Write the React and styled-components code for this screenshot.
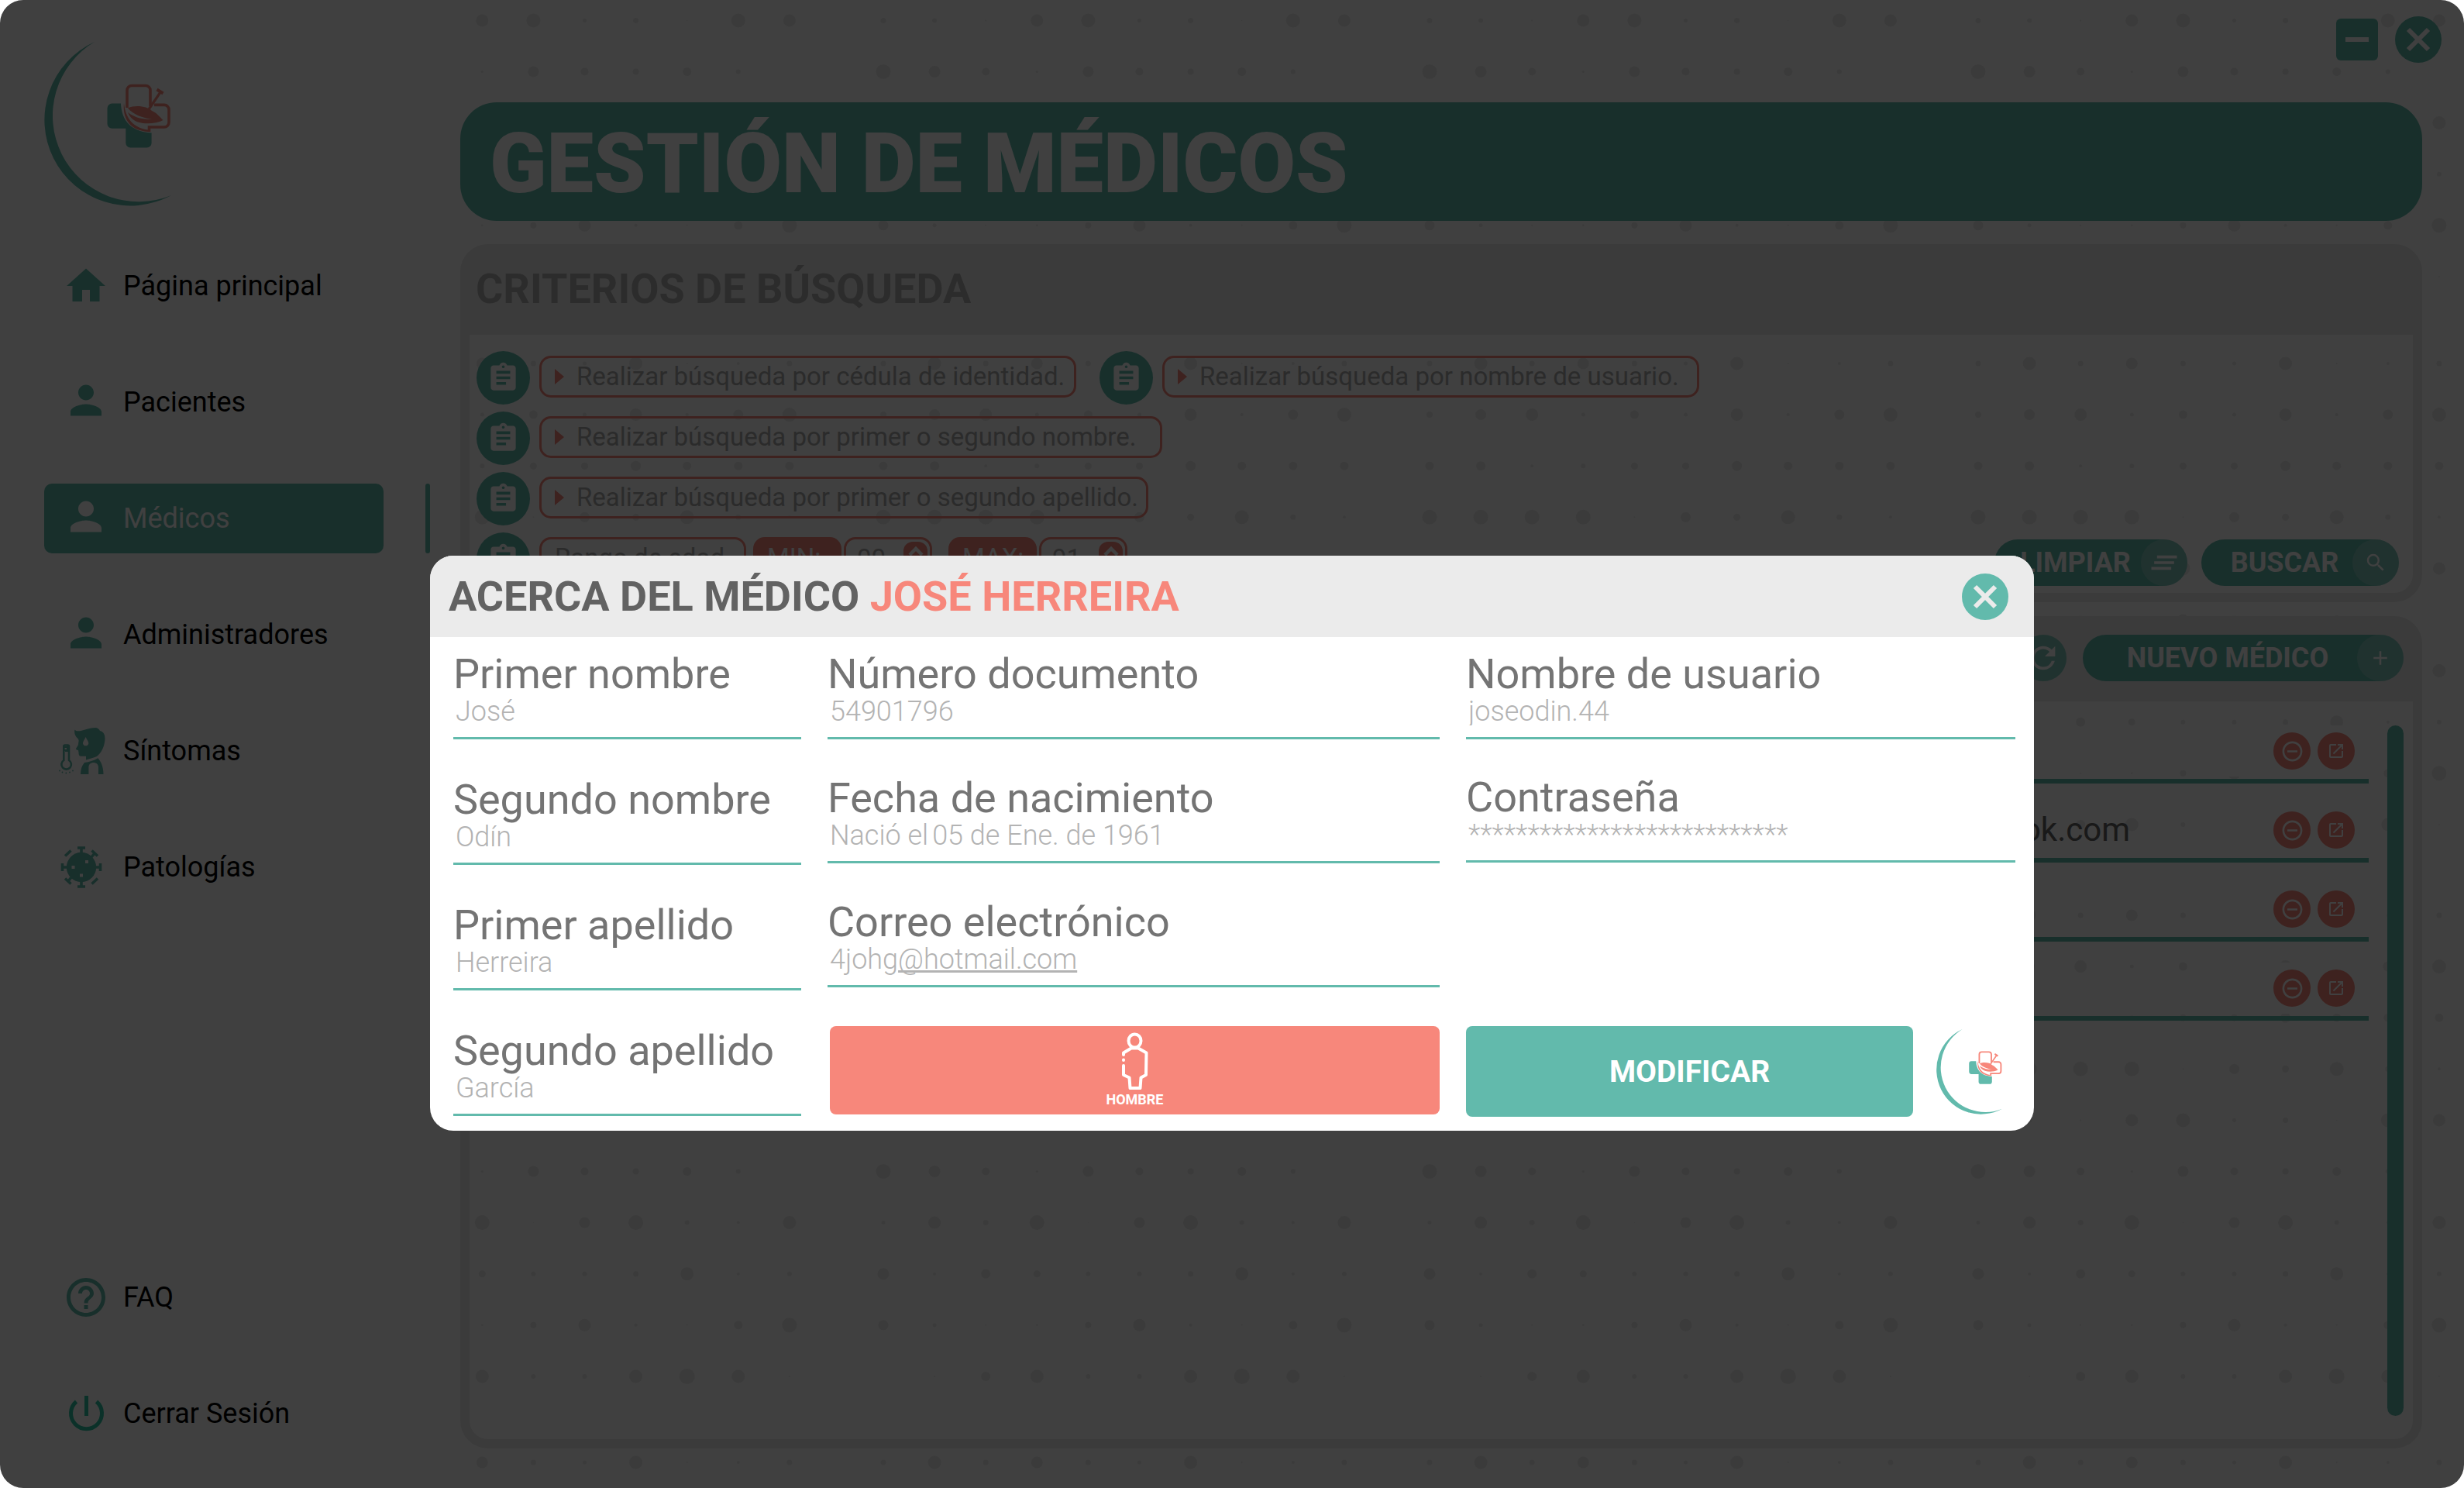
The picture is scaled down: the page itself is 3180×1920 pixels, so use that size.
import React from "react";
import styled, { createGlobalStyle, css } from "styled-components";
import {
  MdHome,
  MdPerson,
  MdHelpOutline,
  MdAssignment,
  MdClearAll,
  MdSearch,
  MdAdd,
  MdRefresh,
  MdRemoveCircleOutline,
  MdOpenInNew,
} from "react-icons/md";

const teal = "#62baac";
const coral = "#f7877b";
const mist = "#ebebeb";

const GlobalStyle = createGlobalStyle`
  *, *::before, *::after { box-sizing: border-box; }
  html, body, #root { height: 100%; }
  body { margin: 0; background: #fff; font-family: Roboto, "Liberation Sans", sans-serif; }
  button, input { font-family: inherit; }
  svg { display: block; flex: none; }
`;

/* ---------- shell ---------- */

const Window = styled.div`
  position: relative;
  display: flex;
  min-height: 100vh;
  background: #fff;
  border-radius: 30px;
  overflow: hidden;
`;

const Dots = styled.svg`
  position: absolute;
  inset: 0;
  width: 100%;
  height: 100%;
  fill: ${mist};
`;

const Sidebar = styled.aside`
  position: relative;
  display: flex;
  flex-direction: column;
  flex: none;
  width: 594px;
  padding: 54px 39px 51px 57px;
`;

const NavList = styled.nav`
  display: flex;
  flex-direction: column;
  gap: 60px;
  margin-top: ${(p) => (p.$bottom ? "auto" : "58px")};
`;

const NavRow = styled.div`
  display: flex;
  justify-content: space-between;
`;

const NavLink = styled.a`
  display: flex;
  align-items: center;
  gap: 18px;
  width: 438px;
  height: 90px;
  padding: 0 24px;
  border-radius: 10px;
  font-size: 36px;
  line-height: 42px;
  text-decoration: none;
  color: ${(p) => (p.$active ? "#fff" : "#000")};
  background: ${(p) => (p.$active ? teal : "transparent")};
  svg {
    width: 60px;
    height: 60px;
    overflow: visible;
    color: ${(p) => (p.$active ? "#fff" : teal)};
  }
`;

const ActiveMark = styled.span`
  width: 6px;
  border-radius: 3px;
  background: ${teal};
`;

const Main = styled.main`
  position: relative;
  display: flex;
  flex-direction: column;
  flex: 1;
  min-width: 0;
  padding: 21px 54px 51px 0;
`;

const WindowControls = styled.div`
  display: flex;
  align-items: center;
  justify-content: flex-end;
  gap: 22px;
  margin: 0 -25px 51px 0;
`;

const ControlButton = styled.button`
  display: flex;
  align-items: center;
  justify-content: center;
  flex: none;
  padding: 0;
  border: 0;
  width: ${(p) => (p.$square ? 54 : 60)}px;
  height: ${(p) => (p.$square ? 54 : 60)}px;
  border-radius: ${(p) => (p.$square ? "6px" : "50%")};
  background: ${teal};
  color: ${(p) => p.$glyph || "#fff"};
`;

const Banner = styled.h1`
  display: flex;
  align-items: center;
  height: 153px;
  margin: 0 0 30px;
  padding: 4px 38px 0;
  border-radius: 47px;
  background: ${teal};
  color: #fff;
  font-size: 108px;
  line-height: 108px;
  font-weight: 900;
`;

/* ---------- panels ---------- */

const Panel = styled.section`
  display: flex;
  flex-direction: column;
  border: 12px solid ${mist};
  border-top: 0;
  border-radius: 36px;
  ${(p) => p.$grow && css`flex: 1; margin-top: 18px;`}
`;

const PanelHead = styled.header`
  display: flex;
  align-items: center;
  justify-content: flex-end;
  gap: 21px;
  height: ${(p) => p.$height}px;
  margin: 0 -12px;
  padding: 0 24px 2px 20px;
  border-radius: 36px 36px 0 0;
  background: ${mist};
`;

const PanelTitle = styled.h2`
  flex: 1;
  margin: 0;
  color: #b0b0b0;
  font-size: 54px;
  line-height: 60px;
  font-weight: 700;
`;

const CriteriaBody = styled.div`
  display: flex;
  align-items: flex-end;
  justify-content: space-between;
  padding: 21px 18px 9px 9px;
`;

const CriteriaList = styled.div`
  display: flex;
  flex-direction: column;
  gap: 9px;
`;

const CriteriaRow = styled.div`
  display: flex;
  gap: 30px;
`;

const Criterion = styled.div`
  display: flex;
  align-items: flex-start;
  gap: 12px;
  > :not(:first-child) {
    margin-top: 6px;
  }
`;

const RoundIcon = styled.span`
  display: flex;
  align-items: center;
  justify-content: center;
  width: 69px;
  height: 69px;
  border-radius: 50%;
  background: ${teal};
  color: #fff;
`;

const Pill = styled.button`
  display: flex;
  align-items: center;
  gap: 16px;
  width: ${(p) => p.$width}px;
  height: 54px;
  padding: 0 17px;
  border: 3px solid ${coral};
  border-radius: 15px;
  background: transparent;
  color: #adadad;
  font-size: 33px;
  line-height: 42px;
  font-weight: 400;
  white-space: nowrap;
`;

const Arrow = styled.span`
  border-left: 12px solid ${coral};
  border-top: 10px solid transparent;
  border-bottom: 10px solid transparent;
`;

const AgeRange = styled.div`
  display: flex;
  align-items: center;
  gap: 3px;
  margin-left: ${(p) => (p.$first ? -3 : 9)}px;
`;

const AgeLabel = styled.label`
  width: 114px;
  height: 54px;
  padding-left: 18px;
  border-radius: 15px;
  background: ${coral};
  color: #fff;
  font-size: 33px;
  line-height: 54px;
  font-weight: 400;
`;

const AgeBox = styled.div`
  display: flex;
  justify-content: space-between;
  width: 114px;
  height: 54px;
  padding: 3px 3px 3px 14px;
  border: 3px solid ${coral};
  border-radius: 15px;
`;

const AgeInput = styled.input`
  width: 56px;
  padding: 0;
  border: 0;
  background: transparent;
  color: #adadad;
  font-size: 33px;
`;

const Stepper = styled.button`
  display: flex;
  align-items: flex-start;
  justify-content: center;
  width: 31px;
  height: 42px;
  padding: 5px 0 0;
  border: 0;
  border-radius: 12px;
  background: ${coral};
  color: #fff;
`;

const ButtonRow = styled.div`
  display: flex;
  gap: 18px;
`;

const ActionButton = styled.button`
  display: flex;
  align-items: center;
  width: ${(p) => p.$width}px;
  height: 60px;
  padding: 0;
  border: 0;
  border-radius: 30px;
  background: ${teal};
  color: #fff;
  font-size: 36px;
  line-height: 42px;
  font-weight: 700;
  white-space: nowrap;
`;

const ActionText = styled.span`
  flex: 1;
  padding-left: 20px;
  text-align: center;
`;

const ActionIcon = styled.span`
  display: flex;
  align-items: center;
  justify-content: center;
  width: 60px;
  height: 60px;
  border-radius: 50%;
  background: rgba(255, 255, 255, 0.2);
`;

const ResultsBody = styled.div`
  display: flex;
  flex: 1;
  gap: 24px;
  padding: 4px 12px 30px 9px;
`;

const ResultList = styled.ul`
  flex: 1;
  margin: 0;
  padding: 0;
  list-style: none;
`;

const ResultRow = styled.li`
  display: flex;
  align-items: flex-end;
  justify-content: flex-end;
  height: 102px;
  padding-bottom: 3px;
  border-bottom: 6px solid ${teal};
`;

const Mail = styled.span`
  margin-right: 126px;
  color: #646464;
  font-size: 42px;
  line-height: 66px;
`;

const RowActions = styled.div`
  display: flex;
  gap: 9px;
  padding: 9px 18px 9px 59px;
  background: #fff;
`;

const RowButton = styled.button`
  display: flex;
  align-items: center;
  justify-content: center;
  width: 48px;
  height: 48px;
  padding: 0;
  border: 0;
  border-radius: 50%;
  background: ${coral};
  color: #fff;
`;

const ScrollBar = styled.div`
  width: 21px;
  margin-top: 27px;
  border-radius: 11px;
  background: ${teal};
`;

/* ---------- modal ---------- */

const Backdrop = styled.div`
  position: absolute;
  inset: 0;
  display: flex;
  align-items: center;
  justify-content: center;
  padding-top: 256px;
  background: rgba(0, 0, 0, 0.75);
`;

const Dialog = styled.section`
  width: 65.1%;
  border-radius: 30px;
  background: #fff;
  overflow: hidden;
`;

const DialogHead = styled.header`
  display: flex;
  align-items: center;
  justify-content: space-between;
  height: 105px;
  padding: 0 33px 0 24px;
  background: ${mist};
`;

const DialogTitle = styled.h2`
  margin: 0;
  color: #626262;
  font-size: 54px;
  line-height: 60px;
  font-weight: 700;
  em {
    font-style: normal;
    color: ${coral};
  }
`;

const DialogBody = styled.div`
  display: grid;
  grid-template-columns: 449fr 790fr 709fr;
  column-gap: 34px;
  padding: 22px 24px 18px 30px;
`;

const Column = styled.div`
  display: flex;
  flex-direction: column;
  gap: ${(p) => p.$gap}px;
`;

const FieldBox = styled.div`
  display: flex;
  flex-direction: column;
  gap: 4px;
  height: 110px;
  border-bottom: 3px solid ${teal};
`;

const FieldLabel = styled.label`
  color: #747474;
  font-size: 54px;
  line-height: 52px;
  white-space: nowrap;
`;

const valueText = css`
  height: 36px;
  padding: 0 3px;
  color: #b3b3b3;
  font-size: 36px;
  line-height: 36px;
  font-weight: 300;
`;

const FieldInput = styled.input`
  ${valueText}
  width: 100%;
  border: 0;
  background: transparent;
`;

const FieldOutput = styled.output`
  ${valueText}
  white-space: nowrap;
`;

const MailDomain = styled.a`
  color: inherit;
  text-decoration: underline;
  text-decoration-skip-ink: none;
`;

const BirthDate = styled.time`
  margin-left: 5px;
`;

const GenderButton = styled.button`
  display: flex;
  flex-direction: column;
  align-items: center;
  gap: 1px;
  height: 114px;
  margin: auto 0 3px 3px;
  padding: 6px 0 0;
  border: 0;
  border-radius: 8px;
  background: ${coral};
  color: #fff;
  font-size: 18px;
  line-height: 20px;
  font-weight: 700;
`;

const Footer = styled.div`
  display: flex;
  align-items: center;
  gap: 30px;
  margin-top: auto;
  padding-right: 16px;
`;

const ModifyButton = styled.button`
  flex: 1;
  height: 117px;
  border: 0;
  border-radius: 8px;
  background: ${teal};
  color: #fff;
  font-size: 39px;
  font-weight: 700;
`;

/* ---------- drawings ---------- */

const DOT_RADII = [
  [3.5, 8.5, 3.5, 7.5, 3.5, 2.5, 8.5, 1, 2, 3.5],
  [4, 7, 8, 2.5, 5.5, 2.5, 8, 2, 6.5, 9],
  [5.5, 6, 2, 3, 4.5, 4.5, 6.5, 5.5, 5.5, 5.5],
  [9.5, 9.5, 9.5, 9.5, 1, 6.5, 4.5, 9, 3.5, 2],
  [3.5, 3, 1, 8, 9, 2.5, 3.5, 0.7, 9, 8],
  [9.5, 7.5, 5, 1.5, 7, 5, 4, 5.5, 3, 0],
  [2.5, 8, 3.5, 9.5, 0.5, 7, 9.5, 3, 2, 8.5],
  [7.5, 2, 6, 4.5, 3, 3, 3.5, 8.5, 2, 3],
  [6.5, 2.5, 1, 1.2, 4, 8, 2, 1, 5.5, 9.5],
  [0, 1, 6, 8.5, 3, 3, 8.5, 10, 8.5, 1],
];
const TILE_X = [424, 1140, 1845, 2553];
const TILE_Y = [-238, 469, 1181, 1887];

function DotField() {
  const dots = [];
  TILE_X.forEach((tx) =>
    TILE_Y.forEach((ty) =>
      DOT_RADII.forEach((row, j) =>
        row.forEach((r, i) => {
          const x = tx + i * 66.1;
          const y = ty + j * 66.1;
          if (x > 600 && y > 0 && r) dots.push(<circle key={`${x}-${y}`} cx={x} cy={y} r={r} />);
        })
      )
    )
  );
  return (
    <Dots viewBox="0 0 3180 1920" preserveAspectRatio="xMinYMin slice" aria-hidden="true">
      {dots}
    </Dots>
  );
}

function Logo({ width, height }) {
  return (
    <svg width={width} height={height} viewBox="57 54 166 212" fill="none" aria-hidden="true">
      <path
        fill={teal}
        d="M122 54A110.75 110.75 0 1 0 221 252A111 111 0 0 1 122 54Z"
      />
      <path
        fill={teal}
        d="M145 133.6H162V150L195.6 168V184.500a6 6 0 0 1-6 6H168.300a6 6 0 0 1-6-6V165.700H144.500a6 6 0 0 1-6-6V139.600a6 6 0 0 1 6.500-6Z"
      />
      <path fill="#fff" d="M156 128C155 152 166 170 196 171.500L197 160L166 130Z" />
      <g stroke={coral} strokeWidth="3.600">
        <path d="M164 139V116.500a6 6 0 0 1 6-6H188a6 6 0 0 1 6 6V137" />
        <path d="M199 135.400H212a6 6 0 0 1 6 6V158a6 6 0 0 1-6 6H192.500V170" />
        <path d="M192 141L207 119" strokeWidth="3.200" />
        <path d="M202.500 115.500L210.500 120.500" strokeWidth="4" />
      </g>
      <path
        fill={coral}
        d="M165 139.500C175 135 190 137 196 143C203 146 206 151 210.500 155C201 160 188 160.500 178 157.500C171 155 167 150 165 145C174 152 184 154 196 154C184 152 172 148 165 139.500Z"
      />
      <path
        fill={coral}
        d="M160 133C158 151 166 168 191 170V167.500C173 165 162 154 160 133Z"
      />
    </svg>
  );
}

function CrossGlyph() {
  return (
    <svg width="34" height="34" viewBox="0 0 34 34" stroke="currentColor" strokeWidth="6" aria-hidden="true">
      <path d="M4 4L30 30M30 4L4 30" />
    </svg>
  );
}

function ChevronUp() {
  return (
    <svg width="20" height="14" viewBox="0 0 20 14" fill="none" stroke="currentColor" strokeWidth="4.500" aria-hidden="true">
      <path d="M2 12L10 4L18 12" />
    </svg>
  );
}

function SymptomsIcon() {
  return (
    <svg viewBox="5 0 60 60" fill="currentColor" aria-hidden="true">
      <path
        fillRule="evenodd"
        d="M20.500 2.500C22 5 27 4.700 32 3C38 1 43 0 47 0C50 0 52 2 53 4C58 5 59.800 10 59.500 15C59 21 57.500 26 55 30C52 35 49 37.500 45 38.500L35 41.500V36.700H28.500C26 36.700 25.500 35 25.500 32L25 29C23 28.700 21.500 28 22.200 26.500C24 24 25.500 22 25.200 19.500C26.500 15 24.500 14 22.500 12C20 9 19.800 5 20.500 2.500ZM34.600 12C33 15.500 31 17.500 31 20.200A3.700 3.700 0 0 0 38.300 20.200C38.300 17.500 36.200 15.500 34.600 12Z"
      />
      <path d="M33 45C39 44.500 45 42.500 50.300 39.300C54 43 57.500 50 57.500 60H51V51C51 43 38.400 43 38.400 51V60H28C28 54 29.500 49 33 45Z" />
      <path
        fill="none"
        stroke="currentColor"
        strokeWidth="2.600"
        d="M6.300 42V24A1.500 1.500 0 0 1 7.800 22.500H11.500A1.500 1.500 0 0 1 13 24V42A6.300 6.300 0 1 1 6.300 42Z"
      />
      <path d="M6 24H11V26H6ZM6 28H10V30H6ZM12 22V31H8V29H10V24Z" />
      <circle cx="1" cy="55.500" r="0.900" />
      <circle cx="4.500" cy="57.500" r="0.900" />
      <circle cx="9.300" cy="58.500" r="0.900" />
      <circle cx="14" cy="57.500" r="0.900" />
      <circle cx="18" cy="55.500" r="0.900" />
    </svg>
  );
}

function VirusIcon() {
  return (
    <svg viewBox="6 0 60 60" fill="currentColor" aria-hidden="true">
      <circle cx="30" cy="30" r="19.200" />
      <g stroke="currentColor" strokeWidth="3.600">
        <path d="M30 12V5M25 5H35M30 48V55M25 55H35M12 30H5.500M5.500 25V35M48 30H54.500M54.500 25V35" />
        <path d="M43 17L47 12M43.500 8.500L51 15.500M17 43L13 48M9 44.500L16.500 51.500" />
        <path d="M16.500 8.500L9 15.500M51 44.500L43.500 51.500" />
      </g>
      <g fill="#fff">
        <rect x="35" y="21" width="4" height="4" />
        <rect x="17.500" y="28" width="4" height="4" />
        <rect x="28" y="38.500" width="4" height="4" />
      </g>
    </svg>
  );
}

function PowerIcon() {
  return (
    <svg viewBox="0 0 60 60" fill="none" stroke="#2cc4a2" strokeWidth="5" aria-hidden="true">
      <path d="M17.500 14.500A20 20 0 1 0 43.500 14.500" />
      <path d="M30.500 7V33" />
    </svg>
  );
}

function ManIcon() {
  return (
    <svg width="38" height="78" viewBox="0 0 38 78" fill="none" stroke="#fff" strokeWidth="4" strokeLinecap="round" strokeLinejoin="round" aria-hidden="true">
      <ellipse cx="19.500" cy="13" rx="8" ry="8.500" />
      <path d="M5 31V28.500L15 22.500H24L34.500 28.500L34 57L27.500 60.500L26.500 74H13.500L12.500 60.500L5 57V45" />
      <path d="M5 37.500V38" />
    </svg>
  );
}

/* ---------- parts ---------- */

const links = [
  { text: "Página principal", icon: <MdHome /> },
  { text: "Pacientes", icon: <MdPerson viewBox="0 1 24 24" /> },
  { text: "Médicos", icon: <MdPerson viewBox="0 1 24 24" />, active: true },
  { text: "Administradores", icon: <MdPerson viewBox="0 1 24 24" /> },
  { text: "Síntomas", icon: <SymptomsIcon /> },
  { text: "Patologías", icon: <VirusIcon /> },
];
const bottomLinks = [
  { text: "FAQ", icon: <MdHelpOutline /> },
  { text: "Cerrar Sesión", icon: <PowerIcon /> },
];

function Nav({ items, bottom }) {
  return (
    <NavList $bottom={bottom}>
      {items.map((l) => (
        <NavRow key={l.text}>
          <NavLink href="#" $active={l.active} aria-current={l.active ? "page" : undefined}>
            {l.icon}
            {l.text}
          </NavLink>
          {l.active && <ActiveMark />}
        </NavRow>
      ))}
    </NavList>
  );
}

function SearchBy({ width, children }) {
  return (
    <Criterion>
      <RoundIcon>
        <MdAssignment size={43} />
      </RoundIcon>
      <Pill $width={width}>
        <Arrow />
        {children}
      </Pill>
    </Criterion>
  );
}

function Age({ id, label, value, first }) {
  return (
    <AgeRange $first={first}>
      <AgeLabel htmlFor={id}>{label}</AgeLabel>
      <AgeBox>
        <AgeInput id={id} defaultValue={value} />
        <Stepper aria-label="Aumentar">
          <ChevronUp />
        </Stepper>
      </AgeBox>
    </AgeRange>
  );
}

function Action({ width, icon, children }) {
  return (
    <ActionButton $width={width}>
      <ActionText>{children}</ActionText>
      <ActionIcon>{icon}</ActionIcon>
    </ActionButton>
  );
}

function Field({ id, label, value, children }) {
  return (
    <FieldBox>
      <FieldLabel htmlFor={id}>{label}</FieldLabel>
      {children ? (
        <FieldOutput id={id}>{children}</FieldOutput>
      ) : (
        <FieldInput id={id} defaultValue={value} readOnly />
      )}
    </FieldBox>
  );
}

const results = ["", "outlook.com", "", ""];

export default function App() {
  return (
    <Window>
      <GlobalStyle />
      <DotField />
      <Sidebar>
        <Logo width={166} height={212} />
        <Nav items={links} />
        <Nav items={bottomLinks} bottom />
      </Sidebar>

      <Main>
        <WindowControls>
          <ControlButton $square aria-label="Minimizar">
            <svg width="30" height="6" viewBox="0 0 30 6" fill="currentColor">
              <rect width="30" height="6" />
            </svg>
          </ControlButton>
          <ControlButton aria-label="Cerrar ventana">
            <CrossGlyph />
          </ControlButton>
        </WindowControls>

        <Banner>GESTIÓN DE MÉDICOS</Banner>

        <Panel>
          <PanelHead $height={117}>
            <PanelTitle>CRITERIOS DE BÚSQUEDA</PanelTitle>
          </PanelHead>
          <CriteriaBody>
            <CriteriaList>
              <CriteriaRow>
                <SearchBy width={693}>Realizar búsqueda por cédula de identidad.</SearchBy>
                <SearchBy width={693}>Realizar búsqueda por nombre de usuario.</SearchBy>
              </CriteriaRow>
              <SearchBy width={804}>Realizar búsqueda por primer o segundo nombre.</SearchBy>
              <SearchBy width={786}>Realizar búsqueda por primer o segundo apellido.</SearchBy>
              <Criterion>
                <RoundIcon>
                  <MdAssignment size={43} />
                </RoundIcon>
                <Pill $width={267}>Rango de edad.</Pill>
                <Age id="min" label="MIN:" value="00" first />
                <Age id="max" label="MAX:" value="91" />
              </Criterion>
            </CriteriaList>
            <ButtonRow>
              <Action width={249} icon={<MdClearAll size={44} />}>
                LIMPIAR
              </Action>
              <Action width={255} icon={<MdSearch size={30} />}>
                BUSCAR
              </Action>
            </ButtonRow>
          </CriteriaBody>
        </Panel>

        <Panel $grow>
          <PanelHead $height={110}>
            <ActionButton $width={60} aria-label="Actualizar">
              <ActionIcon>
                <MdRefresh size={46} />
              </ActionIcon>
            </ActionButton>
            <Action width={414} icon={<MdAdd size={30} />}>
              NUEVO MÉDICO
            </Action>
          </PanelHead>
          <ResultsBody>
            <ResultList>
              {results.map((mail, i) => (
                <ResultRow key={i}>
                  {mail && <Mail>{mail}</Mail>}
                  <RowActions>
                    <RowButton aria-label="Eliminar">
                      <MdRemoveCircleOutline size={31} />
                    </RowButton>
                    <RowButton aria-label="Abrir">
                      <MdOpenInNew size={24} />
                    </RowButton>
                  </RowActions>
                </ResultRow>
              ))}
            </ResultList>
            <ScrollBar />
          </ResultsBody>
        </Panel>
      </Main>

      <Backdrop>
        <Dialog role="dialog" aria-modal="true" aria-labelledby="dialog-title">
          <DialogHead>
            <DialogTitle id="dialog-title">
              ACERCA DEL MÉDICO <em>JOSÉ HERREIRA</em>
            </DialogTitle>
            <ControlButton $glyph={mist} aria-label="Cerrar">
              <CrossGlyph />
            </ControlButton>
          </DialogHead>
          <DialogBody>
            <Column $gap={52}>
              <Field id="name1" label="Primer nombre" value="José" />
              <Field id="name2" label="Segundo nombre" value="Odín" />
              <Field id="last1" label="Primer apellido" value="Herreira" />
              <Field id="last2" label="Segundo apellido" value="García" />
            </Column>
            <Column $gap={50}>
              <Field id="doc" label="Número documento" value="54901796" />
              <Field id="birth" label="Fecha de nacimiento">
                Nació el<BirthDate dateTime="1961-01-05">05 de Ene. de 1961</BirthDate>
              </Field>
              <Field id="mail" label="Correo electrónico">
                4johg<MailDomain href="#">@hotmail.com</MailDomain>
              </Field>
              <GenderButton>
                <ManIcon />
                HOMBRE
              </GenderButton>
            </Column>
            <Column $gap={49}>
              <Field id="user" label="Nombre de usuario" value="joseodin.44" />
              <Field id="pass" label="Contraseña" value="***************************" />
              <Footer>
                <ModifyButton>MODIFICAR</ModifyButton>
                <Logo width={86} height={110} />
              </Footer>
            </Column>
          </DialogBody>
        </Dialog>
      </Backdrop>
    </Window>
  );
}
